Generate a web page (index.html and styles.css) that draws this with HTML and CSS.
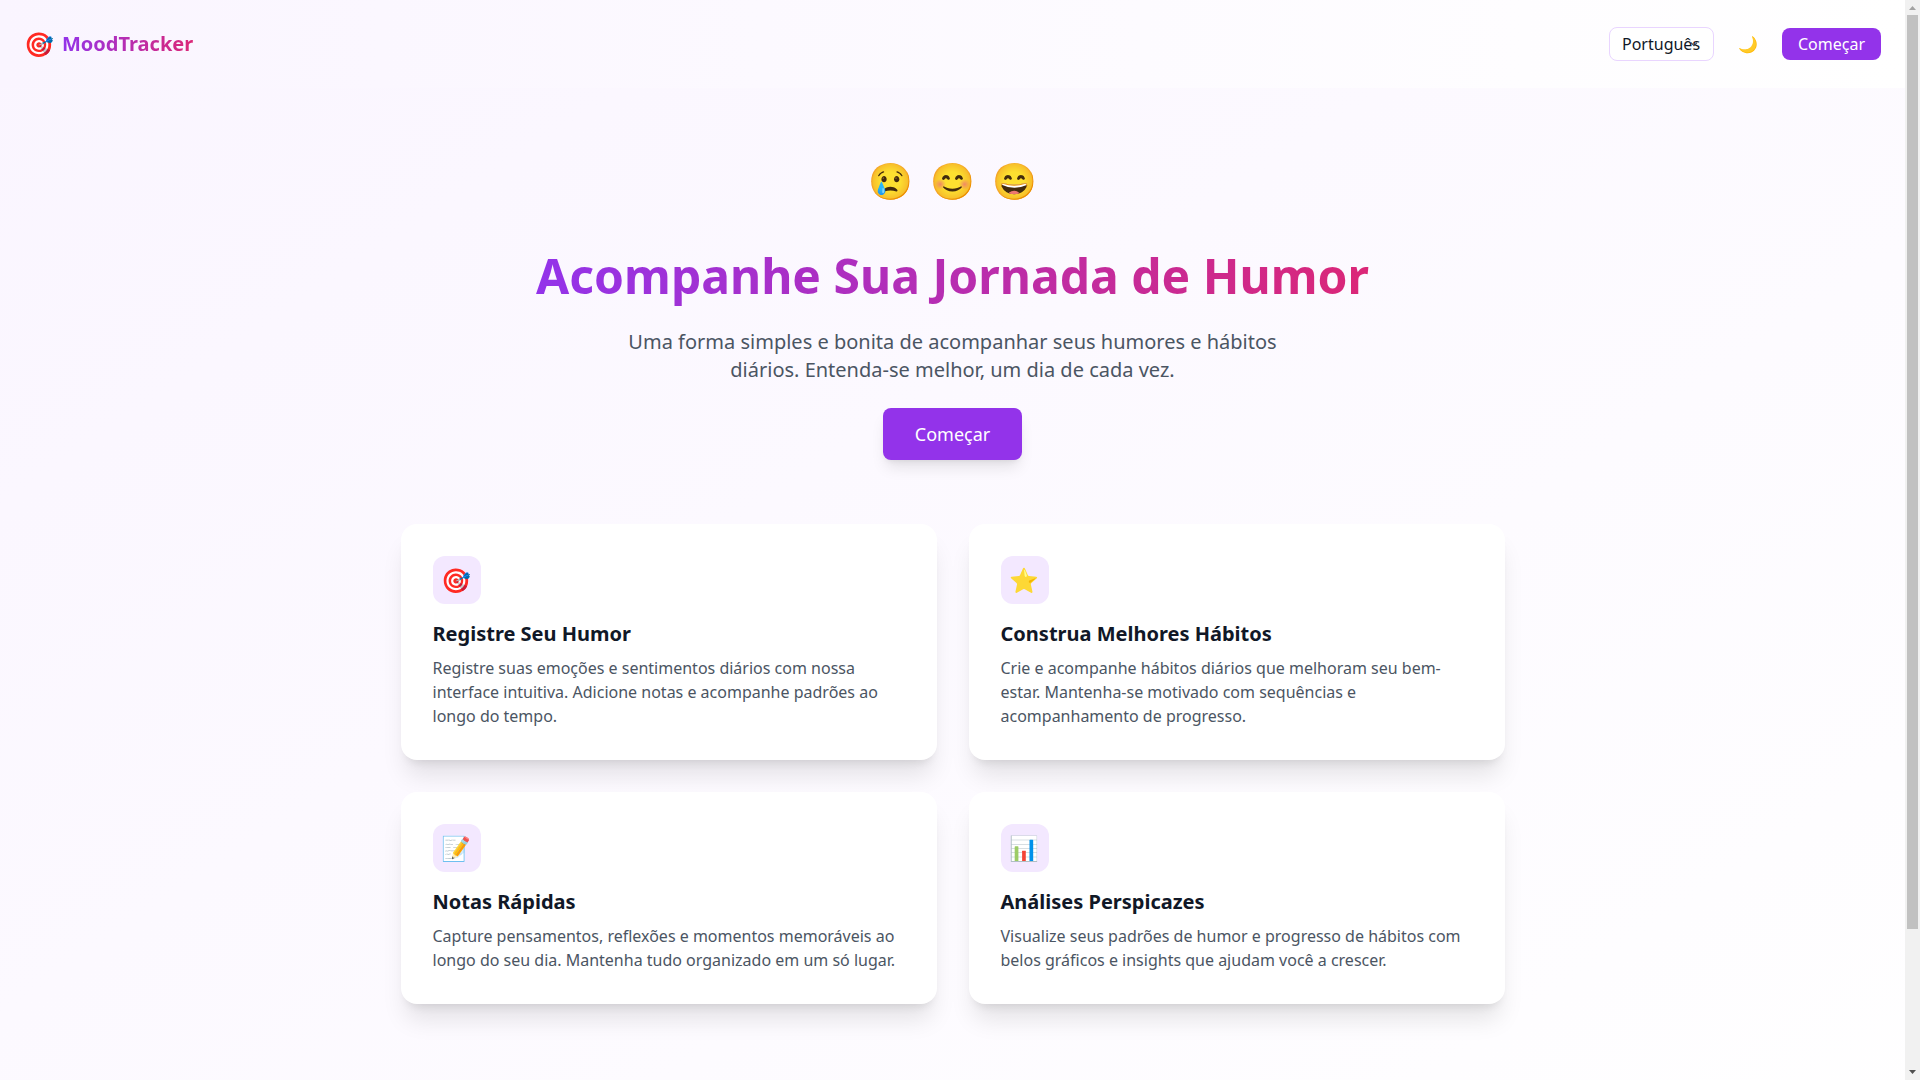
FILE: index.html
```html
<!DOCTYPE html>
<html lang="pt">
<head>
<meta charset="utf-8">
<title>MoodTracker</title>
<link rel="stylesheet" href="styles.css">
</head>
<body>
<div class="viewport">
  <div class="page">
    <header class="topbar">
      <div class="brand"><span class="brand-icon">🎯</span><span class="brand-name">MoodTracker</span></div>
      <nav class="actions">
        <div class="language">Português<svg class="chevron" viewBox="0 0 12 12"><path d="M3 4.7l3 3 3-3" fill="none" stroke="#374151" stroke-width="1.2"/></svg></div>
        <button class="theme">🌙</button>
        <button class="start">Começar</button>
      </nav>
    </header>
    <main class="content">
      <div class="moods"><span>😢</span><span>😊</span><span>😄</span></div>
      <h1 class="title">Acompanhe Sua Jornada de Humor</h1>
      <p class="lead">Uma forma simples e bonita de acompanhar seus humores e hábitos diários. Entenda-se melhor, um dia de cada vez.</p>
      <button class="cta">Começar</button>
      <section class="features">
        <article class="card"><div class="card-icon">🎯</div><h3>Registre Seu Humor</h3><p>Registre suas emoções e sentimentos diários com nossa interface intuitiva. Adicione notas e acompanhe padrões ao longo do tempo.</p></article>
        <article class="card"><div class="card-icon">⭐</div><h3>Construa Melhores Hábitos</h3><p>Crie e acompanhe hábitos diários que melhoram seu bem-estar. Mantenha-se motivado com sequências e acompanhamento de progresso.</p></article>
        <article class="card"><div class="card-icon">📝</div><h3>Notas Rápidas</h3><p>Capture pensamentos, reflexões e momentos memoráveis ao longo do seu dia. Mantenha tudo organizado em um só lugar.</p></article>
        <article class="card"><div class="card-icon">📊</div><h3>Análises Perspicazes</h3><p>Visualize seus padrões de humor e progresso de hábitos com belos gráficos e insights que ajudam você a crescer.</p></article>
      </section>
    </main>
  </div>
  <div class="scrollbar">
    <svg class="arrow" viewBox="0 0 15 15"><path d="M4 10h7L7.500 6z" fill="#a3a3a3"/></svg>
    <span class="thumb"></span>
    <svg class="arrow arrow-down" viewBox="0 0 15 15"><path d="M4 5h7L7.500 9z" fill="#505050"/></svg>
  </div>
</div>
</body>
</html>
```
FILE: styles.css
```css
* { box-sizing: border-box; margin: 0; padding: 0; }
body { font-family: "Noto Sans", sans-serif; font-size: 16px; line-height: 24px; color: #111827; overflow: hidden; }
button { border: 0; font: inherit; }
.viewport { display: flex; width: 1920px; height: 1080px; overflow: hidden; }
.page { flex: 1; height: 1273px; background: linear-gradient(to bottom right, #faf5ff, #fff); }
.topbar { display: flex; justify-content: space-between; align-items: center; height: 88px; padding: 0 24px; background: linear-gradient(to right, #faf5ff, #fff); }
.brand { display: flex; align-items: center; gap: 8px; font-size: 20px; line-height: 32px; font-weight: 700; }
.brand-icon { font-size: 24px; }
.brand-name, .title { background: linear-gradient(to right, #9333ea, #db2777); -webkit-background-clip: text; background-clip: text; color: transparent; }
.actions { display: flex; align-items: center; gap: 16px; }
.language { display: flex; align-items: center; width: 105px; height: 34px; padding: 0 12px; border: 1px solid #e9d5ff; border-radius: 8px; background: #fff; }
.chevron { width: 12px; height: 12px; margin-left: -12px; flex: none; }
.theme { width: 36px; height: 40px; background: none; }
.start { width: 99px; height: 32px; border-radius: 8px; background: #9333ea; color: #fff; }
.content { display: flex; flex-direction: column; align-items: center; padding-top: 73px; }
.moods { display: flex; gap: 17px; font-size: 36px; line-height: 40px; }
.title { margin-top: 45px; font-size: 48px; line-height: 60px; font-weight: 700; }
.lead { width: 672px; margin-top: 22px; font-size: 20px; line-height: 28px; text-align: center; color: #4b5563; }
.cta { width: 139px; height: 52px; margin-top: 24px; border-radius: 8px; font-size: 18px; background: #9333ea; color: #fff; box-shadow: 0 10px 15px -3px rgba(0,0,0,.1), 0 4px 6px -4px rgba(0,0,0,.1); }
.features { display: grid; grid-template-columns: 536px 536px; gap: 32px; margin-top: 64px; }
.card { padding: 32px; border-radius: 16px; background: #fff; box-shadow: 0 20px 25px -5px rgba(0,0,0,.1), 0 8px 10px -6px rgba(0,0,0,.1); }
.card-icon { display: flex; align-items: center; justify-content: center; width: 48px; height: 48px; padding-right: .5px; border-radius: 12px; background: #f3e8ff; font-size: 24px; }
.card h3 { margin: 16px 0 8px; font-size: 20px; line-height: 28px; font-weight: 700; }
.card p { color: #4b5563; }
.scrollbar { display: flex; flex-direction: column; align-items: center; width: 15px; background: #f1f1f1; }
.thumb { width: 11px; height: 914px; background: #c1c1c1; }
.arrow { height: 15px; width: 15px; }
.arrow-down { margin-top: auto; }
```
